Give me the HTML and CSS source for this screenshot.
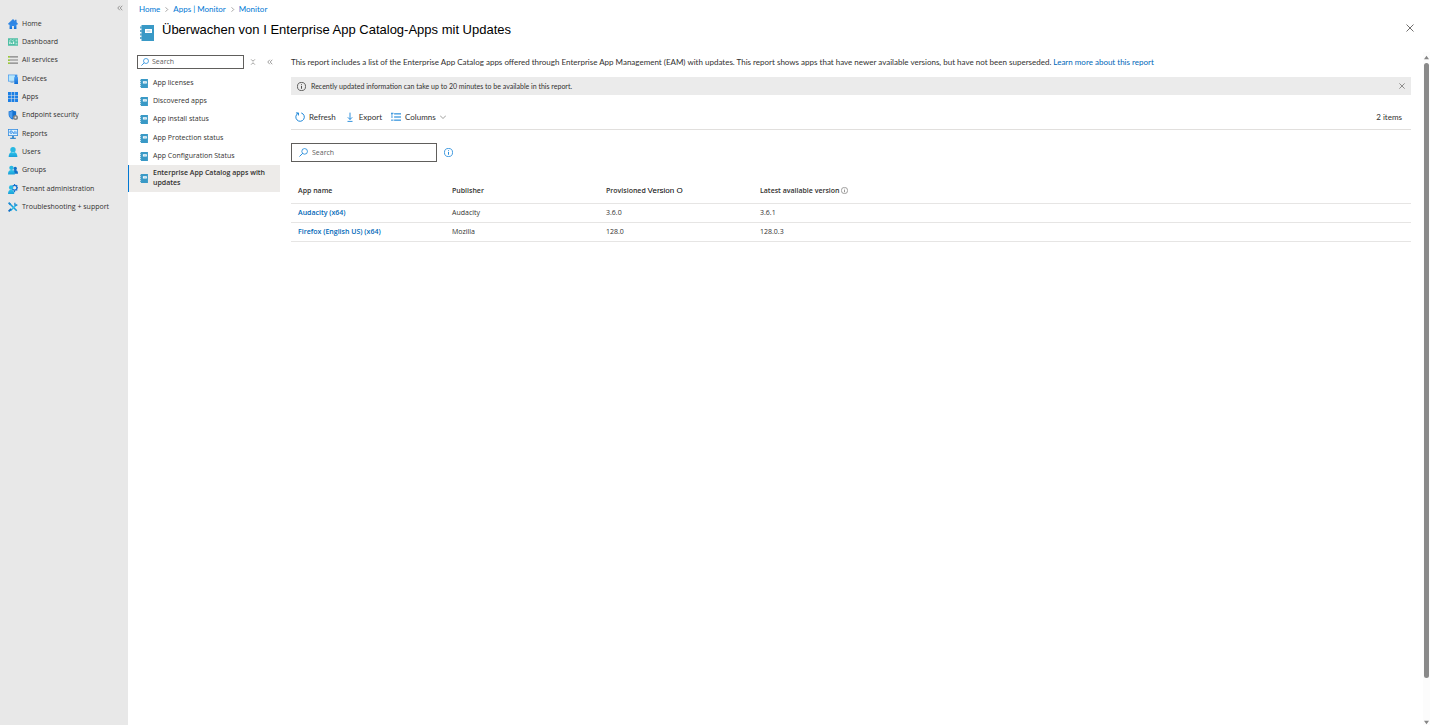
FILE: index.html
```html
<!DOCTYPE html>
<html lang="en">
<head>
<meta charset="UTF-8">
<meta name="viewport" content="width=device-width, initial-scale=1.0">
<title>Enterprise App Catalog apps with updates</title>
<link rel="stylesheet" href="styles.css">
</head>
<body>
<!-- Shared icons -->
<svg class="icon-defs" aria-hidden="true">
  <defs>
    <linearGradient id="blue" x1="0" y1="0" x2="0" y2="1"><stop offset="0" stop-color="#4a9cf0"/><stop offset="1" stop-color="#0f6fd6"/></linearGradient>
    <linearGradient id="cyan" x1="0" y1="0" x2="0" y2="1"><stop offset="0" stop-color="#2cc3ea"/><stop offset="1" stop-color="#1a9fd8"/></linearGradient>
  </defs>
  <symbol id="book" viewBox="0 0 16 16">
    <path d="M2.500 0H15v16H2.500z" fill="#3999c6"/>
    <path d="M1 1.500h2v2H1zM1 5h2v2H1zM1 8.500h2v2H1zM1 12h2v2H1z" fill="#5fa9cb"/>
    <path d="M6 4h7v4H6z" fill="#fff"/>
    <path d="M7.500 5.500h4v1h-4z" fill="#9ccbe2"/>
  </symbol>
  <symbol id="search" viewBox="0 0 16 16">
    <circle cx="10" cy="6" r="5" fill="none" stroke="#0078d4" stroke-width="1.300"/>
    <path d="M6.400 9.600L.8 15.200" stroke="#0078d4" stroke-width="1.500"/>
  </symbol>
  <symbol id="info" viewBox="0 0 16 16">
    <circle cx="8" cy="8" r="7.200" fill="none" stroke="currentColor" stroke-width="1.300"/>
    <path d="M8 7v5M8 4v1.500" stroke="currentColor" stroke-width="1.500"/>
  </symbol>
  <symbol id="close" viewBox="0 0 16 16">
    <path d="M1 1l14 14M15 1L1 15" stroke="currentColor" stroke-width="1.800"/>
  </symbol>
  <symbol id="chevrons" viewBox="0 0 16 16">
    <path d="M7.500 2L2 8l5.500 6M14 2L8.500 8l5.500 6" fill="none" stroke="currentColor" stroke-width="1.600"/>
  </symbol>
  <symbol id="chevron" viewBox="0 0 16 16">
    <path d="M5 1l7 7-7 7" fill="none" stroke="currentColor" stroke-width="1.800"/>
  </symbol>
</svg>

<!-- Sidebar -->
<nav class="sidebar" aria-label="Main">
  <div class="sidebar-top">
    <button class="icon-btn" aria-label="Collapse menu"><svg class="icon-xs"><use href="#chevrons"/></svg></button>
  </div>
  <ul class="nav-list">
    <li><a href="#" class="nav-link">
      <svg class="nav-icon" viewBox="0 0 16 16"><path d="M2.500 7h11v9h-4v-5h-3v5h-4z" fill="url(#blue)"/><path d="M11.500 1h2v5l-2-2z" fill="#1a6fd0"/><path d="M8 0l8 7.500-1.300 1.500H1.300L0 7.500z" fill="#2f86e4"/></svg>
      Home</a></li>
    <li><a href="#" class="nav-link">
      <svg class="nav-icon" viewBox="0 0 16 16"><path d="M0 2h16v12H0z" fill="#4fbfa5"/><path d="M2 11V7h2v4zM5 11V9h2v2zM8 11V7h2v4z" fill="#e2f6f0"/><path d="M2 6l3-2 2 2 3-2" fill="none" stroke="#e2f6f0"/><path d="M12 4h3v3h-3zM12 9h3v3h-3z" fill="#a5e3d2"/></svg>
      Dashboard</a></li>
    <li><a href="#" class="nav-link">
      <svg class="nav-icon" viewBox="0 0 16 16"><path d="M3 3h13M3 8h13M3 13h13" stroke="#808080" stroke-width="1.800"/><path d="M0 3h3M0 8h3M0 13h3" stroke="#7fba00" stroke-width="2"/></svg>
      All services</a></li>
    <li><a href="#" class="nav-link">
      <svg class="nav-icon" viewBox="0 0 16 16"><path d="M0 1h15v11H0z" fill="#3a92ea"/><path d="M1 2h10v9H1z" fill="#b9e6fb"/><path d="M4 12h5v2H4z" fill="#7aaed8"/><path d="M10 5h6v11h-6z" fill="url(#blue)"/></svg>
      Devices</a></li>
    <li><a href="#" class="nav-link">
      <svg class="nav-icon" viewBox="0 0 16 16"><path d="M0 0h4.700v4.700H0zM5.600 0h4.700v4.700H5.600zM11.300 0H16v4.700h-4.700zM0 5.600h4.700v4.700H0zM5.600 5.600h4.700v4.700H5.600zM11.300 5.600H16v4.700h-4.700zM0 11.300h4.700V16H0zM5.600 11.300h4.700V16H5.600zM11.300 11.300H16V16h-4.700z" fill="#1b7fe5"/></svg>
      Apps</a></li>
    <li><a href="#" class="nav-link">
      <svg class="nav-icon" viewBox="0 0 16 16"><path d="M7 0c2 1.500 4 2 6 2v5c0 4-3 6.500-6 8-3-1.500-6-4-6-8V2c2 0 4-.5 6-2z" fill="#1471cf"/><path d="M7 1v13c-3-1.500-5-3.500-5-7V3c2 0 3.500-.7 5-2z" fill="#4a9cf0"/><circle cx="12" cy="12" r="4" fill="#808487"/><circle cx="12" cy="12" r="1.500" fill="#e8e8e8"/></svg>
      Endpoint security</a></li>
    <li><a href="#" class="nav-link">
      <svg class="nav-icon" viewBox="0 0 16 16"><path d="M0 0h16v11H0z" fill="#2d87dd"/><path d="M1.200 1.200h13.600v8.600H1.200z" fill="#e0f2fc"/><circle cx="5" cy="5" r="2" fill="none" stroke="#1b7fe5" stroke-width="1.400"/><path d="M9 8V5M11 8V3M13 8V4" stroke="#1b7fe5" stroke-width="1.200"/><path d="M6.500 11h3v3h3v2h-9v-2h3z" fill="#3b89c9"/></svg>
      Reports</a></li>
    <li><a href="#" class="nav-link">
      <svg class="nav-icon" viewBox="0 0 16 16"><path d="M1 16c0-5 2-8 7-8s7 3 7 8z" fill="url(#cyan)"/><circle cx="8" cy="4.300" r="4.300" fill="#28b8e2"/><path d="M6.500 8.200L8 10l1.500-1.800z" fill="#b9ecfa"/></svg>
      Users</a></li>
    <li><a href="#" class="nav-link">
      <svg class="nav-icon" viewBox="0 0 16 16"><path d="M7 14c0-4 1.500-6 4.500-6S16 10 16 14z" fill="#0f6fc6"/><circle cx="11.500" cy="5.500" r="2.800" fill="#0f6fc6"/><path d="M0 15c0-5 2-7 5.500-7S11 10 11 15z" fill="url(#cyan)"/><circle cx="5.500" cy="4.500" r="3.500" fill="#28b8e2"/></svg>
      Groups</a></li>
    <li><a href="#" class="nav-link">
      <svg class="nav-icon" viewBox="0 0 16 16"><circle cx="10.500" cy="6" r="3.800" fill="none" stroke="#1471cf" stroke-width="2"/><path d="M10.500 0v2M10.500 10v3M14 6h2M13 3.500l1.800-1.800M13 8.500l1.800 1.800" stroke="#1471cf" stroke-width="1.800"/><path d="M0 16c0-5 2-7 5-7s5 2 5 7z" fill="url(#cyan)"/><circle cx="5" cy="5.500" r="3.500" fill="#28b8e2"/></svg>
      Tenant administration</a></li>
    <li><a href="#" class="nav-link">
      <svg class="nav-icon" viewBox="0 0 16 16"><path d="M2 2l12 12" stroke="#199fd9" stroke-width="2.600"/><path d="M14 4L4 14" stroke="#32bde8" stroke-width="2.600"/><path d="M1 15l4-4" stroke="#0f6fc6" stroke-width="3"/><path d="M11 1v4h4" fill="none" stroke="#1a8ad4" stroke-width="2"/><path d="M0 2l2-2 3 3-2 2z" fill="#1a8ad4"/></svg>
      Troubleshooting + support</a></li>
  </ul>
</nav>

<main class="main">
  <!-- Page header -->
  <header class="page-header">
    <nav class="breadcrumb" aria-label="Breadcrumb">
      <a href="#">Home</a>
      <svg class="crumb-sep"><use href="#chevron"/></svg>
      <a href="#">Apps | Monitor</a>
      <svg class="crumb-sep"><use href="#chevron"/></svg>
      <a href="#">Monitor</a>
    </nav>
    <div class="title-row">
      <svg class="title-icon"><use href="#book"/></svg>
      <h1>Überwachen von I Enterprise App Catalog-Apps mit Updates</h1>
      <button class="icon-btn title-close" aria-label="Close"><svg class="icon-sm"><use href="#close"/></svg></button>
    </div>
  </header>

  <div class="content">
    <!-- Report menu -->
    <nav class="menu" aria-label="Monitor">
      <div class="menu-tools">
        <label class="search-box menu-search">
          <svg class="icon-sm"><use href="#search"/></svg>
          <input type="text" placeholder="Search" aria-label="Search menu">
        </label>
        <button class="icon-btn" aria-label="Expand all"><svg class="icon-xs" viewBox="0 0 16 16"><path d="M3 1l5 5 5-5M3 15l5-5 5 5" fill="none" stroke="currentColor" stroke-width="1.600"/></svg></button>
        <button class="icon-btn" aria-label="Hide menu"><svg class="icon-xs"><use href="#chevrons"/></svg></button>
      </div>
      <ul class="menu-list">
        <li><a href="#" class="menu-link"><svg class="menu-icon"><use href="#book"/></svg>App licenses</a></li>
        <li><a href="#" class="menu-link"><svg class="menu-icon"><use href="#book"/></svg>Discovered apps</a></li>
        <li><a href="#" class="menu-link"><svg class="menu-icon"><use href="#book"/></svg>App install status</a></li>
        <li><a href="#" class="menu-link"><svg class="menu-icon"><use href="#book"/></svg>App Protection status</a></li>
        <li><a href="#" class="menu-link"><svg class="menu-icon"><use href="#book"/></svg>App Configuration Status</a></li>
        <li><a href="#" class="menu-link active" aria-current="page"><svg class="menu-icon"><use href="#book"/></svg>Enterprise App Catalog apps with updates</a></li>
      </ul>
    </nav>

    <!-- Report -->
    <section class="report">
      <p class="description">This report includes a list of the Enterprise App Catalog apps offered through Enterprise App Management (EAM) with updates. This report shows apps that have newer available versions, but have not been superseded. <a href="#">Learn more about this report</a></p>
      <div class="notice">
        <svg class="icon-md"><use href="#info"/></svg>
        <span>Recently updated information can take up to 20 minutes to be available in this report.</span>
        <button class="icon-btn notice-close" aria-label="Dismiss"><svg class="icon-xs"><use href="#close"/></svg></button>
      </div>
      <div class="toolbar">
        <button class="tool-btn"><svg class="tool-icon" viewBox="0 0 16 16"><path d="M10 1.500a6.800 6.800 0 1 1-5 .5" fill="none" stroke="#0078d4" stroke-width="1.400"/><path d="M1.500 1.500h4v4" fill="none" stroke="#0078d4" stroke-width="1.400"/></svg>Refresh</button>
        <button class="tool-btn"><svg class="tool-icon" viewBox="0 0 16 16"><path d="M8 1v11M4.500 8.500L8 12l3.500-3.500M4 15h8" fill="none" stroke="#0078d4" stroke-width="1.300"/></svg>Export</button>
        <button class="tool-btn"><svg class="tool-icon" viewBox="0 0 16 16"><path d="M5 3h11M5 8h11M5 13h11" stroke="#0078d4" stroke-width="1.600"/><path d="M0 2h4M1.500 2v4M0 8h3M0 13h4" stroke="#0078d4" stroke-width="1.300"/></svg>Columns<svg class="icon-xs caret" viewBox="0 0 16 16"><path d="M0 4l8 8 8-8" fill="none" stroke="currentColor" stroke-width="1.600"/></svg></button>
        <span class="item-count">2 items</span>
      </div>
      <div class="filter-row">
        <label class="search-box report-search">
          <svg class="icon-md"><use href="#search"/></svg>
          <input type="text" placeholder="Search" aria-label="Search apps">
        </label>
        <button class="icon-btn info-btn" aria-label="Search help"><svg class="icon-md"><use href="#info"/></svg></button>
      </div>
      <table class="app-table">
        <colgroup><col class="col"><col class="col"><col class="col"><col></colgroup>
        <thead>
          <tr>
            <th>App name</th>
            <th>Publisher</th>
            <th>Provisioned <span class="version-label">Version O</span></th>
            <th><span class="th-content">Latest available version<svg class="th-info"><use href="#info"/></svg></span></th>
          </tr>
        </thead>
        <tbody>
          <tr>
            <td><a href="#">Audacity (x64)</a></td>
            <td>Audacity</td>
            <td>3.6.0</td>
            <td>3.6.1</td>
          </tr>
          <tr>
            <td><a href="#">Firefox (English US) (x64)</a></td>
            <td>Mozilla</td>
            <td>128.0</td>
            <td>128.0.3</td>
          </tr>
        </tbody>
      </table>
    </section>

    <!-- Scrollbar -->
    <div class="scrollbar" aria-hidden="true">
      <svg class="scroll-arrow" viewBox="0 0 6 6"><path d="M3 1l3 4H0z" fill="#858585"/></svg>
      <div class="scroll-track"><div class="scroll-thumb"></div></div>
      <svg class="scroll-arrow" viewBox="0 0 6 6"><path d="M3 5l3-4H0z" fill="#858585"/></svg>
    </div>
  </div>
</main>
</body>
</html>
```
FILE: styles.css
```css
/* General Styles */
* {
  box-sizing: border-box;
}
body {
  display: flex;
  min-height: 100vh;
  margin: 0;
  font-family: "Open Sans", "Noto Sans", sans-serif;
  font-size: 7px;
  line-height: 10px;
  color: #323130;
  background-color: #fff;
}
a {
  color: #0067b8;
  text-decoration: none;
}
ul {
  list-style: none;
  margin: 0;
  padding: 0;
}
svg {
  display: block;
  flex-shrink: 0;
}
.icon-defs {
  position: absolute;
  width: 0;
  height: 0;
}
.icon-xs {
  width: 6px;
  height: 6px;
}
.icon-sm {
  width: 8px;
  height: 8px;
}
.icon-md {
  width: 9px;
  height: 9px;
}
.icon-btn {
  padding: 0;
  border: none;
  background: none;
  color: #605e5c;
  cursor: pointer;
}

/* Sidebar */
.sidebar {
  flex-shrink: 0;
  width: 128px;
  background-color: #e8e8e8;
}
.sidebar-top {
  display: flex;
  justify-content: flex-end;
  height: 15px;
  padding: 3px 5px;
}
.nav-link {
  display: flex;
  align-items: center;
  gap: 4px;
  height: 18px;
  padding: 0 8px;
  color: #323130;
  white-space: nowrap;
}
.nav-list li:nth-child(3n),
.menu-list li:nth-child(3n) {
  margin-bottom: 1px;
}
.nav-icon {
  width: 10px;
  height: 10px;
}

/* Page header */
.main {
  flex: 1;
  min-width: 0;
  display: flex;
  flex-direction: column;
}
.page-header {
  padding: 4px 16px 0 11px;
}
.breadcrumb {
  display: flex;
  align-items: center;
  gap: 4px;
}
.breadcrumb,
.description,
.toolbar {
  font-family: Lato, "Open Sans", sans-serif;
  font-size: 8px;
}
.breadcrumb a {
  color: #0078d4;
}
.crumb-sep {
  width: 5px;
  height: 5px;
  color: #605e5c;
}
.title-row {
  display: flex;
  align-items: center;
  gap: 7px;
  height: 38px;
}
.title-icon {
  width: 16px;
  height: 16px;
}
h1 {
  margin: 0 0 6px;
  font-family: "Liberation Sans", Arial, sans-serif;
  font-size: 13px;
  font-weight: normal;
  line-height: 18px;
  color: #000;
}
.title-close {
  margin: 0 0 10px auto;
}

/* Report menu */
.content {
  flex: 1;
  display: flex;
}
.menu {
  flex-shrink: 0;
  width: 152px;
}
.menu-tools {
  display: flex;
  align-items: center;
  gap: 11px;
  padding: 3px 7px 0 9px;
}
.search-box {
  display: flex;
  align-items: center;
  border: 1px solid #605e5c;
  background-color: #fff;
}
.search-box input {
  flex: 1;
  min-width: 0;
  padding: 0;
  border: none;
  outline: none;
  font: inherit;
  color: inherit;
}
.search-box input::placeholder {
  color: #605e5c;
  opacity: 1;
}
.menu-search {
  width: 107px;
  height: 14px;
  margin-right: -5px;
  padding: 0 3px;
  gap: 3px;
}
.menu-list {
  margin-top: 5px;
}
.menu-link {
  display: flex;
  align-items: center;
  gap: 4px;
  min-height: 18px;
  padding: 0 10px;
  border-left: 1px solid transparent;
  color: #323130;
}
.menu-link.active {
  border-left-color: #0078d4;
  padding-top: 3px;
  padding-bottom: 4px;
  background-color: #edebe9;
  font-weight: 600;
}
.menu-icon {
  width: 10px;
  height: 9px;
}

/* Report */
.report {
  flex: 1;
  min-width: 0;
  padding: 5px 12px 0 11px;
}
.description {
  margin: 0;
}
.notice {
  display: flex;
  align-items: center;
  gap: 5px;
  height: 18px;
  margin-top: 10px;
  padding: 0 6px;
  background-color: #ebebeb;
  font-family: Lato, "Open Sans", sans-serif;
}
.notice-close {
  margin-left: auto;
}
.toolbar {
  display: flex;
  align-items: center;
  gap: 9px;
  height: 35px;
  padding: 9px 9px 0 4px;
  border-bottom: 1px solid #e1dfdd;
}
.tool-btn {
  display: flex;
  align-items: center;
  gap: 4px;
  padding: 0;
  border: none;
  background: none;
  font: inherit;
  color: inherit;
  cursor: pointer;
}
.tool-icon {
  width: 10px;
  height: 10px;
}
.caret {
  color: #605e5c;
}
.item-count {
  margin-left: auto;
}
.filter-row {
  display: flex;
  align-items: center;
  gap: 7px;
  margin-top: 13px;
}
.report-search {
  width: 146px;
  height: 19px;
  padding: 0 7px;
  gap: 4px;
}
.info-btn {
  color: #0078d4;
}
.app-table {
  width: 100%;
  margin-top: 17px;
  border-collapse: collapse;
  table-layout: fixed;
}
.col {
  width: 154px;
}
.app-table th,
.app-table td {
  height: 19px;
  padding: 0 7px;
  border-bottom: 1px solid #e6e5e4;
  text-align: left;
}
.app-table th {
  height: 24px;
  font-weight: 600;
}
.app-table td a {
  font-weight: 600;
}
.version-label {
  font-family: "Liberation Sans", Arial, sans-serif;
  font-size: 8px;
  font-weight: normal;
  color: #000;
}
.th-content {
  display: flex;
  align-items: center;
  gap: 1px;
}
.th-info {
  width: 7px;
  height: 7px;
  color: #605e5c;
}

/* Scrollbar */
.scrollbar {
  display: flex;
  flex-direction: column;
  align-items: center;
  width: 7px;
  padding: 3px 0 0;
  background-color: #fcfcfc;
}
.scroll-arrow {
  width: 5px;
  height: 5px;
}
.scroll-track {
  flex: 1;
  width: 5px;
  padding: 3px 0;
}
.scroll-thumb {
  height: 94%;
  border-radius: 3px;
  background-color: #8a8a8a;
}
```
